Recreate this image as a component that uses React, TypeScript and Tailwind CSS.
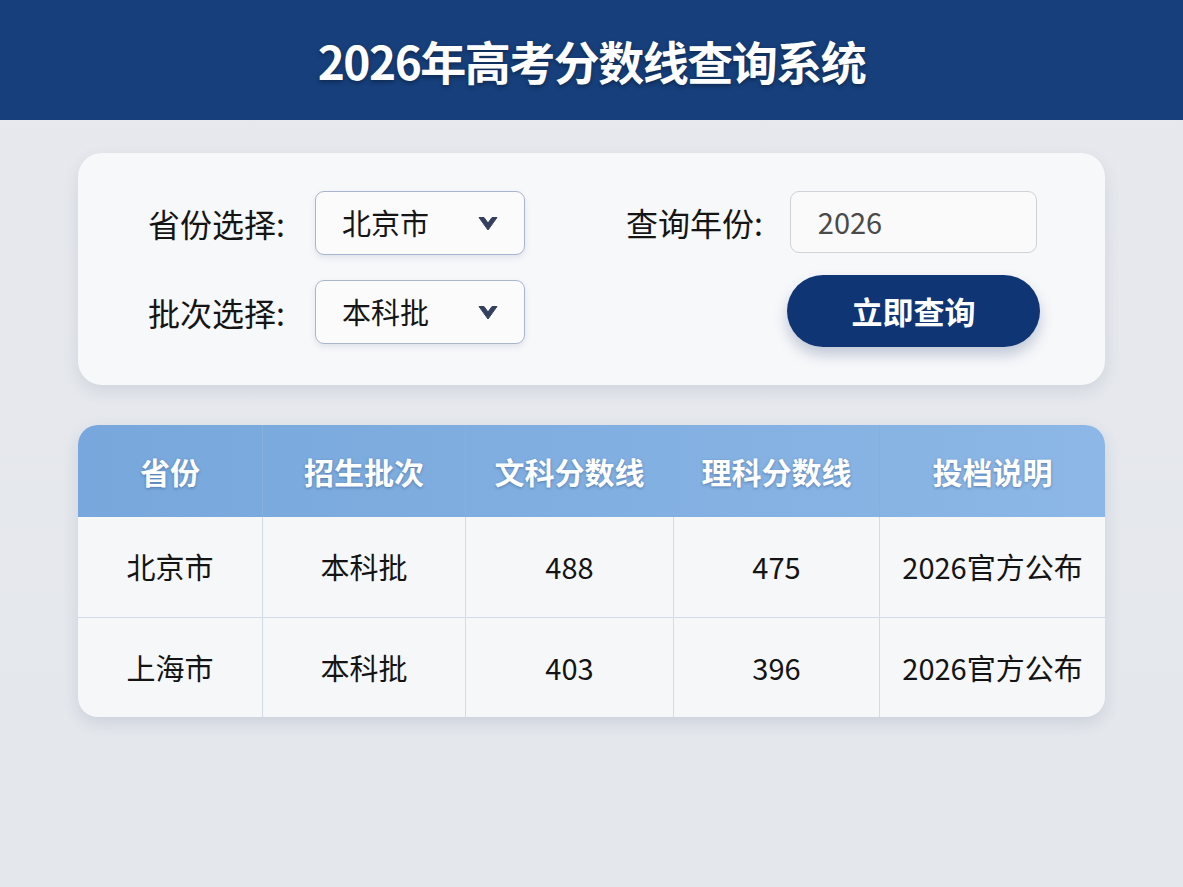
const rows = [
  { province: '北京市', batch: '本科批', arts: 488, science: 475, note: '2026官方公布' },
  { province: '上海市', batch: '本科批', arts: 403, science: 396, note: '2026官方公布' },
];

const columns = [
  { title: '省份', width: 'w-[185px]' },
  { title: '招生批次', width: 'w-[203px]' },
  { title: '文科分数线', width: 'w-[208px]' },
  { title: '理科分数线', width: 'w-[206px]' },
  { title: '投档说明', width: 'flex-1' },
];

// solid arrowhead used on the dropdowns
function Caret() {
  return (
    <svg width="20" height="15" viewBox="0 0 20 15" className="text-[#34415e]">
      <polygon points="1,1.5 6,1.5 10,7 14,1.5 19,1.5 10,14" fill="currentColor" stroke="currentColor" strokeWidth="1" strokeLinejoin="round" />
    </svg>
  );
}

function Select({ value }: { value: string }) {
  return (
    <div className="flex h-[64px] w-[210px] items-center justify-between rounded-[9px] border border-[#a9b5cf] bg-[#fbfbfc] pl-[26px] pr-[26px] shadow-[0_3px_6px_rgba(60,80,130,0.12)]">
      <span className="text-[29px] text-[#161616]">{value}</span>
      <Caret />
    </div>
  );
}

export default function App() {
  return (
    <div
      className="min-h-[887px] w-full bg-gradient-to-b from-[#e7e9ee] to-[#e4e7ec]"
      style={{ fontFamily: '"Noto Sans CJK SC", "Noto Sans", sans-serif' }}
    >
      <header className="flex h-[120px] items-center justify-center bg-[#163f7b]">
        <h1 className="text-[46px] font-bold tracking-[-1.5px] text-white [text-shadow:0_2px_4px_rgba(0,0,0,0.35)]">
          2026年高考分数线查询系统
        </h1>
      </header>

      <main className="mx-[78px] pt-[33px]">
        {/* query form */}
        <section className="flex h-[232px] rounded-[24px] bg-[#f7f8fa] pl-[70px] pt-[38px] shadow-[0_6px_16px_rgba(60,75,110,0.12)]">
          <div className="flex flex-col gap-[25px]">
            <div className="flex items-center gap-[30px]">
              <span className="text-[32px] text-[#151515]">省份选择:</span>
              <Select value="北京市" />
            </div>
            <div className="flex items-center gap-[30px]">
              <span className="text-[32px] text-[#151515]">批次选择:</span>
              <Select value="本科批" />
            </div>
          </div>
          <div className="ml-[101px] flex flex-col items-start">
            <div className="flex items-center gap-[27px]">
              <span className="text-[32px] text-[#151515]">查询年份:</span>
              <div className="flex h-[62px] w-[247px] items-center rounded-[9px] border border-[#cfd2d8] bg-[#fafafb] pl-[27px]">
                <span className="text-[29px] text-[#4a4a4a]">2026</span>
              </div>
            </div>
            <button className="ml-[161px] mt-[22px] flex h-[72px] w-[253px] items-center justify-center rounded-full bg-[#0f3574] text-[31px] font-bold text-white shadow-[0_8px_14px_rgba(30,55,110,0.25)]">
              立即查询
            </button>
          </div>
        </section>

        {/* score table */}
        <section className="mt-[40px] overflow-hidden rounded-[20px] bg-[#f6f7f9] shadow-[0_6px_16px_rgba(60,75,110,0.14)]">
          <div className="flex h-[92px] bg-gradient-to-r from-[#77a7dc] to-[#8cb7e6]">
            {columns.map((col, i) => (
              <div
                key={col.title}
                className={`${col.width} flex items-center justify-center text-[30px] font-bold text-white [text-shadow:0_1px_3px_rgba(30,60,110,0.45)] ${i < columns.length - 1 ? 'border-r border-[#86afde]' : ''}`}
              >
                {col.title}
              </div>
            ))}
          </div>
          {rows.map((row, r) => (
            <div key={row.province} className={`flex h-[100px] ${r > 0 ? 'border-t border-[#d3daea]' : ''}`}>
              {[row.province, row.batch, row.arts, row.science, row.note].map((cell, i) => (
                <div
                  key={i}
                  className={`${columns[i].width} flex items-center justify-center text-[29px] text-[#141414] ${i < 4 ? 'border-r border-[#d3daea]' : ''}`}
                >
                  {cell}
                </div>
              ))}
            </div>
          ))}
        </section>
      </main>
    </div>
  );
}
